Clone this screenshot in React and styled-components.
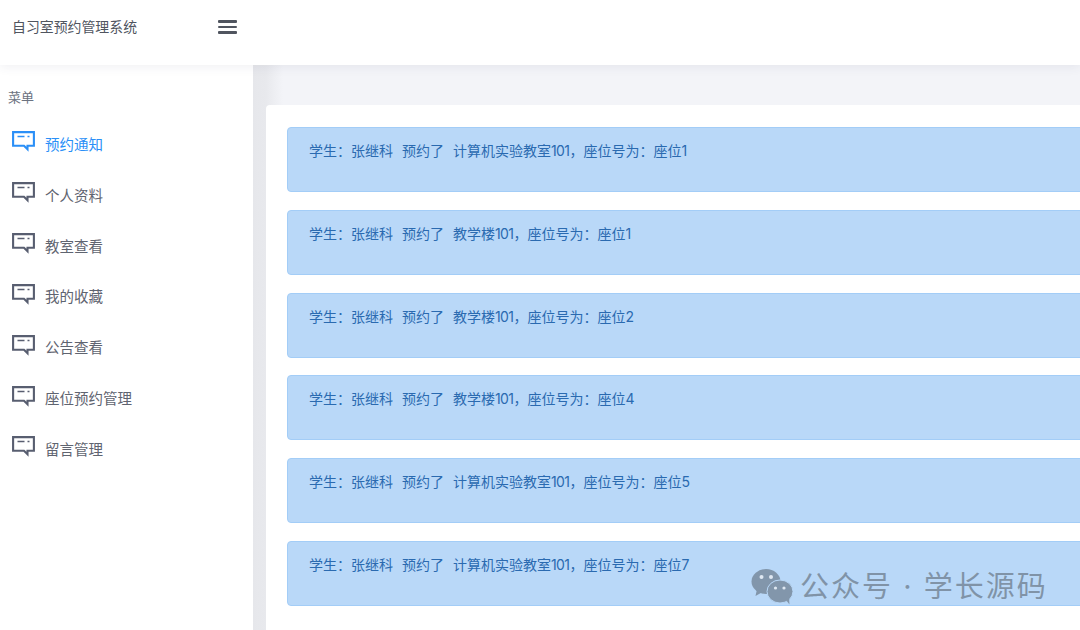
import React from 'react';
import styled, { createGlobalStyle } from 'styled-components';

const GlobalStyle = createGlobalStyle`
    html, body {
        margin: 0;
        padding: 0;
        height: 100%;
        overflow: hidden;
        background: #f3f4f8;
        font-family: Inter, "Noto Sans CJK SC", sans-serif;
    }
    * {
        box-sizing: border-box;
    }
`;

const Page = styled.div`
    position: relative;
    width: 1080px;
    height: 630px;
    display: flex;
    flex-flow: column;
    overflow: hidden;
`;

const Header = styled.header`
    position: relative;
    z-index: 2;
    flex: 0 0 65px;
    display: flex;
    align-items: center;
    padding: 0 0 11px 12px;
    background: #fff;
    box-shadow: 0 2px 10px rgba(60, 70, 100, 0.08);
`;

const Title = styled.div`
    width: 206px;
    margin-bottom: 2px;
    font-size: 13.9px;
    color: #50555f;
`;

const Burger = styled.div`
    width: 19px;
    display: flex;
    flex-flow: column;
    gap: 2.7px;

    span {
        height: 2.6px;
        background: #50555f;
        border-radius: 1px;
    }
`;

const Body = styled.div`
    flex: 1;
    display: flex;
    min-height: 0;
`;

const Sidebar = styled.aside`
    position: relative;
    z-index: 1;
    flex: 0 0 253px;
    padding: 23px 0 0 0;
    background: #fff;
`;

const MenuLabel = styled.div`
    padding-left: 8px;
    font-size: 13px;
    line-height: 18px;
    color: #6b7280;
    margin-bottom: 12px;
`;

const MenuItem = styled.div`
    height: 50.83px;
    display: flex;
    align-items: center;
    padding-left: 12px;
    gap: 10px;
    font-size: 14.5px;
    color: ${({ $active }) => ($active ? '#2a8ff7' : '#5f6470')};
`;

const MainArea = styled.main`
    flex: 1;
    padding: 40px 0 0 13px;
    min-width: 0;
    background: linear-gradient(90deg, #e6e7eb 0, #e8e9ed 13px, #f3f4f8 30px);
`;

const Card = styled.section`
    height: 100%;
    padding: 22px 0 0 21px;
    background: #fff;
    border-radius: 4px 0 0 0;
    display: flex;
    flex-flow: column;
    gap: 17.8px;
`;

const Notice = styled.div`
    flex: 0 0 65px;
    width: 830px;
    padding: 13px 21px;
    display: flex;
    gap: 9px;
    font-size: 14px;
    line-height: 20px;
    color: #2a6ab0;
    background: #b9d8f8;
    border: 1px solid #a3cdf7;
    border-radius: 4px;
`;

const Digits = styled.span`
    letter-spacing: -0.6px;
`;

const Watermark = styled.div`
    position: absolute;
    left: 751px;
    top: 568px;
    display: flex;
    align-items: center;
    gap: 7px;
    font-size: 29px;
    line-height: 38px;
    letter-spacing: 2px;
    color: rgba(110, 125, 140, 0.75);
`;

const MENU = ['预约通知', '个人资料', '教室查看', '我的收藏', '公告查看', '座位预约管理', '留言管理'];

const NOTICES = [
    ['计算机实验教室', '1'],
    ['教学楼', '1'],
    ['教学楼', '2'],
    ['教学楼', '4'],
    ['计算机实验教室', '5'],
    ['计算机实验教室', '7'],
];

const ChatIcon = ({ color }) => (
    <svg width="23" height="22" viewBox="0 0 23 22" fill="none" style={{ marginTop: -4 }}>
        <path d="M1.100 2.100h20.800v13.700h-6.400v3.400L12 15.800H1.100z" stroke={color} strokeWidth="2.100" />
        <path d="M5.500 6.500h7M15.500 6.500h2" stroke={color} strokeWidth="1.600" />
    </svg>
);

const WechatLogo = () => (
    <svg width="42" height="36" viewBox="0 0 42 36">
        <ellipse cx="15" cy="12.500" rx="14.500" ry="12.500" fill="#8296ab" />
        <path d="M6 20l-1.500 7 7-4z" fill="#8296ab" />
        <ellipse cx="29" cy="22.500" rx="13" ry="11.500" fill="#8296ab" stroke="#b9d8f8" strokeWidth="1" />
        <path d="M35 31l3.500 4.500-.5-7z" fill="#8296ab" />
        <circle cx="10.500" cy="8" r="2" fill="#dfe8f2" />
        <circle cx="20" cy="8" r="2" fill="#dfe8f2" />
        <circle cx="24.500" cy="19" r="1.600" fill="#dfe8f2" />
        <circle cx="33" cy="19" r="1.600" fill="#dfe8f2" />
    </svg>
);

const App = () => {
    return (
        <Page>
            <GlobalStyle />
            <Header>
                <Title>自习室预约管理系统</Title>
                <Burger>
                    <span />
                    <span />
                    <span />
                </Burger>
            </Header>

            <Body>
                <Sidebar>
                    <MenuLabel>菜单</MenuLabel>
                    {MENU.map((name, i) => (
                        <MenuItem key={name} $active={i === 0}>
                            <ChatIcon color={i === 0 ? '#2a8ff7' : '#585e70'} />
                            {name}
                        </MenuItem>
                    ))}
                </Sidebar>

                <MainArea>
                    <Card>
                        {NOTICES.map(([room, seat], i) => (
                            <Notice key={i}>
                                <span>学生：张继科</span>
                                <span>预约了</span>
                                <span>{room}<Digits>101</Digits>，座位号为：座位{seat}</span>
                            </Notice>
                        ))}
                    </Card>
                </MainArea>
            </Body>

            <Watermark>
                <WechatLogo />
                公众号 · 学长源码
            </Watermark>
        </Page>
    );
};

export default App;
